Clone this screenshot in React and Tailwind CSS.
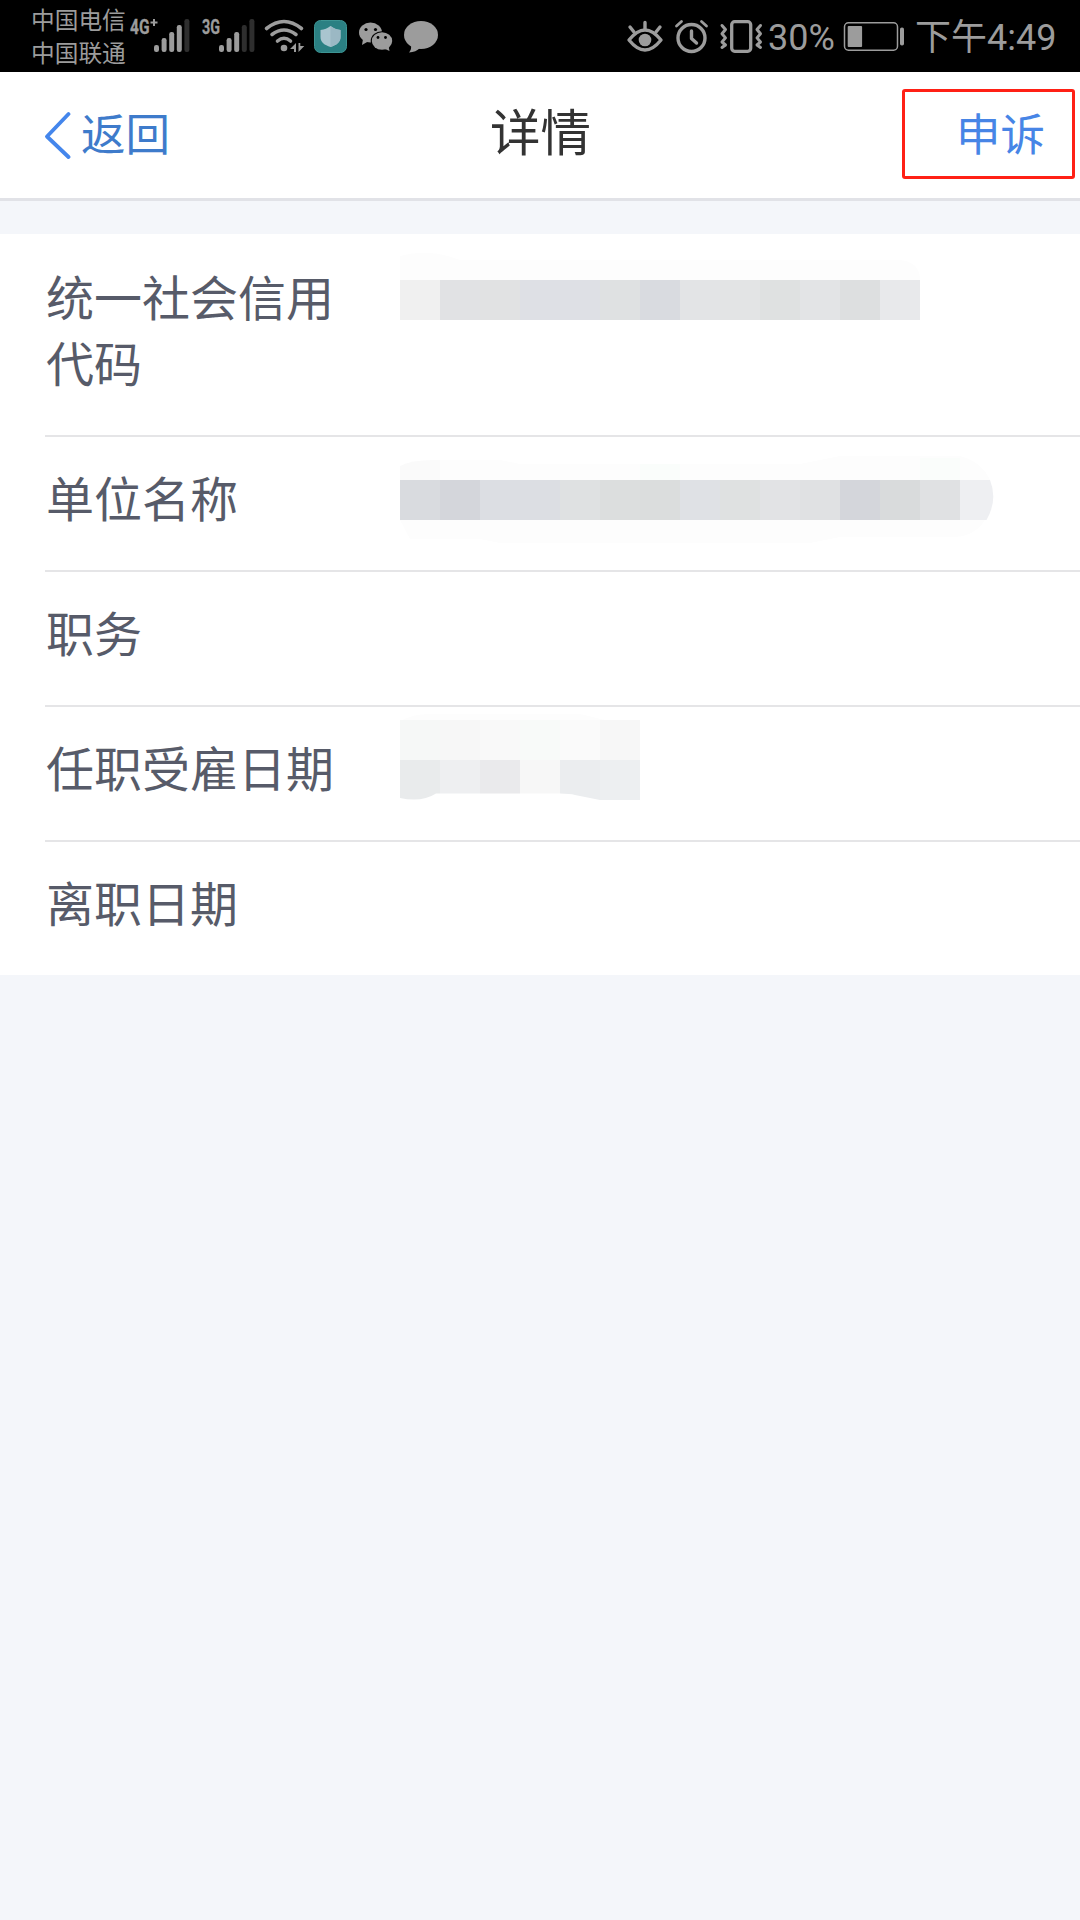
import clsx from "clsx";

const SignalIcon = ({ label, plus, level, className }) => (
  <svg viewBox="0 0 64 72" className={clsx("h-[72px] w-16 shrink-0", className)}>
    <text
      x="2"
      y="33.5"
      fontSize="20"
      fontWeight="700"
      fontFamily="Roboto, 'Liberation Sans', sans-serif"
      textLength={plus ? 19.5 : 18}
      lengthAdjust="spacingAndGlyphs"
      fill="#9c9c9c"
      stroke="#9c9c9c"
      strokeWidth="0.3"
    >
      {label}
    </text>
    {plus && <path d="M26 19v7M22.500 22.500h7" stroke="#9c9c9c" strokeWidth="2" />}
    {[45, 38, 32, 25, 19].map((top, i) => (
      <rect
        key={top}
        x={(plus ? 26 : 19) + i * 7.600}
        y={top}
        width="5"
        height={52 - top}
        rx="2.200"
        fill={i < level ? "#9c9c9c" : "#2e2e2e"}
      />
    ))}
  </svg>
);

const WifiIcon = () => (
  <svg viewBox="262 0 42 72" className="h-[72px] w-[42px] shrink-0">
    <g fill="none" stroke="#9c9c9c" strokeWidth="3.600" strokeLinecap="round">
      <path d="M265.500 28.500Q283 14.500 300.500 28.500" />
      <path d="M271 34.500Q283 25.500 295 34.500" />
      <path d="M276.500 41Q283 35.500 289.500 41" />
    </g>
    <circle cx="283" cy="48" r="3.300" fill="#9c9c9c" />
    <path d="M295 43v9h-2v-3h-4zM297.500 52v-9h1.800v3h4z" fill="#9c9c9c" />
  </svg>
);

const ShieldIcon = () => (
  <svg viewBox="312 0 36 72" className="h-[72px] w-9 shrink-0">
    <rect x="313.500" y="20.500" width="32" height="32" rx="6" fill="#2b8083" stroke="#3d9493" />
    <path
      d="M329.500 26c3 2.400 6 3.500 10 4v7c0 5.500-4 8-10 10-6-2-10-4.500-10-10v-7c4-.5 7-1.600 10-4z"
      fill="#a9c5cf"
    />
    <path d="M329.500 26c3 2.400 6 3.500 10 4v7c0 5.500-4 8-10 10z" fill="#9bb8c4" />
  </svg>
);

const WeChatIcon = () => (
  <svg viewBox="356 0 38 72" className="h-[72px] w-[38px] shrink-0">
    <ellipse cx="369.500" cy="32.500" rx="11.500" ry="10" fill="#9c9c9c" />
    <path d="M362 39l-1 6 6-3.500z" fill="#9c9c9c" />
    <ellipse cx="381" cy="41" rx="11.300" ry="9.800" fill="#000" />
    <ellipse cx="381" cy="41" rx="10.200" ry="8.700" fill="#9c9c9c" />
    <path d="M383 48.500l5.500 2.500-1-5z" fill="#9c9c9c" />
    <g fill="#000">
      <circle cx="365" cy="29.500" r="1.600" />
      <circle cx="374.500" cy="29.500" r="1.600" />
      <circle cx="377" cy="37.500" r="1.400" />
      <circle cx="384.500" cy="37.500" r="1.400" />
    </g>
  </svg>
);

const ChatIcon = () => (
  <svg viewBox="402 0 36 72" className="h-[72px] w-9 shrink-0">
    <ellipse cx="420" cy="35" rx="17" ry="14" fill="#9c9c9c" />
    <path d="M410 44q1 5-2 8.500 7-.5 11-4.500z" fill="#9c9c9c" />
  </svg>
);

const EyeIcon = () => (
  <svg viewBox="626 0 38 72" className="h-[72px] w-[38px] shrink-0">
    <g fill="none" stroke="#9c9c9c" strokeWidth="3.400" strokeLinecap="round" strokeLinejoin="round">
      <path d="M629 40q16-20 32 0-16 20-32 0z" />
      <path d="M645 29v-6.500M634 32l-4-5M656 32l4-5" />
    </g>
    <circle cx="645" cy="40" r="6.300" fill="#9c9c9c" />
  </svg>
);

const AlarmIcon = () => (
  <svg viewBox="674 0 36 72" className="h-[72px] w-9 shrink-0">
    <g fill="none" stroke="#9c9c9c" strokeWidth="3.400" strokeLinecap="round" strokeLinejoin="round">
      <circle cx="691.500" cy="38" r="13.500" />
      <path d="M691.500 31v7.500l5 4.500" />
      <path d="M676.500 26l5-4.500M706.500 26l-5-4.500" strokeWidth="2.800" />
    </g>
  </svg>
);

const VibrateIcon = () => (
  <svg viewBox="719 0 44 72" className="h-[72px] w-11 shrink-0">
    <g fill="none" stroke="#9c9c9c" strokeWidth="3.300" strokeLinecap="round" strokeLinejoin="round">
      <rect x="731.700" y="21.700" width="19" height="29.600" rx="3" />
      <path d="M722 25.500l3.500 4-3.500 4.200 3.500 4.200-3.500 4.100 3.500 3-3.500 2.500" strokeWidth="3" />
      <path d="M760.500 25.500l-3.500 4 3.500 4.200-3.500 4.200 3.500 4.100-3.500 3 3.500 2.500" strokeWidth="3" />
    </g>
  </svg>
);

const BatteryIcon = () => (
  <svg viewBox="843 0 62 72" className="h-[72px] w-[62px] shrink-0">
    <rect x="844.500" y="22.800" width="53" height="27.400" rx="4" fill="none" stroke="#9c9c9c" strokeWidth="1.500" />
    <rect x="847.700" y="26" width="14.400" height="21" rx="1" fill="#9c9c9c" />
    <rect x="900" y="27.500" width="4" height="18" rx="1.800" fill="#9c9c9c" />
  </svg>
);

const StatusBar = () => (
  <div className="flex h-[72px] items-center bg-black text-[#9c9c9c]">
    <div className="ml-[31px] w-[97px] shrink-0 pt-1 whitespace-nowrap text-[23.700px] leading-[33px]">
      <div>中国电信</div>
      <div>中国联通</div>
    </div>
    <SignalIcon label="4G" plus level={4} />
    <SignalIcon label="3G" level={3} className="ml-2" />
    <div className="-ml-px flex gap-2">
      <WifiIcon />
      <ShieldIcon />
      <WeChatIcon />
      <ChatIcon />
    </div>
    <div className="ml-auto flex h-full items-center pr-[23px]">
      <EyeIcon />
      <div className="w-2.5" />
      <AlarmIcon />
      <div className="w-[9px]" />
      <VibrateIcon />
      <span className="ml-[5px] w-[75px] pt-[3px] text-[36px] leading-none">30%</span>
      <BatteryIcon />
      <span className="ml-[10px] w-[142px] pt-[3px] whitespace-nowrap text-[36px] leading-none">下午4:49</span>
    </div>
  </div>
);

const Header = () => (
  <header className="flex h-[129px] items-start justify-between border-b-[3px] border-[#e1e2e7] bg-white">
    <button className="flex w-[178px] items-start pt-[31px] pl-11 text-[44.500px] leading-[66px] text-[#3e7bcb]">
      <svg viewBox="0 0 28 48" className="mt-2 h-12 w-7 shrink-0">
        <path
          d="M24.500 3L3 25.500 24.500 46"
          fill="none"
          stroke="#4486ec"
          strokeWidth="3.800"
          strokeLinecap="round"
          strokeLinejoin="round"
        />
      </svg>
      <span className="ml-[9px] whitespace-nowrap">返回</span>
    </button>
    <h1 className="pt-[25px] pl-px text-[50.500px] leading-[74px] text-[#333]">详情</h1>
    <button className="mt-[17px] mr-[5px] flex h-[90px] w-[173px] items-center justify-end rounded-[3px] border-[3px] border-[#ff2015] pt-1 pr-[27px] text-[44.500px] leading-none text-[#4785e6]">
      申诉
    </button>
  </header>
);

const MosaicCode = () => (
  <svg viewBox="0 0 520 80" className="h-20 w-[520px]">
    <path d="M0 16Q30 8 60 20h440q20 2 20 20H0z" fill="#fdfdfd" />
    {["#f0f0f0", "#e1e2e4", "#e1e2e3", "#dee0e5", "#dee0e5", "#dfe1e2", "#d9dbe0", "#e3e4e6", "#e3e4e5", "#dfe1e1", "#e3e4e6", "#dddfe0", "#e8e9eb"].map(
      (fill, i) => (
        <rect key={i} x={i * 40} y="40" width="40" height="40" fill={fill} />
      )
    )}
  </svg>
);

const MosaicName = () => (
  <svg viewBox="0 0 600 110" className="h-[110px] w-[600px]">
    <path d="M0 30Q10 20 40 20h60l20 4h280l40-8h120q22 6 30 24H0zM0 80h585q-10 16-30 17H440l-30 6H100l-20-4H10z" fill="#fdfdfd" />
    <path d="M0 40V26q12-7 40-6v20z" fill="#fafafa" />
    <path d="M240 24h40v16h-40zM520 18h40v22h-40z" fill="#fafdfb" />
    {["#d9dbdf", "#d4d6db", "#dcdee3", "#dcdee3", "#dfe1e2", "#dcdede", "#dbdddd", "#dfe1e5", "#dfe1e1", "#e2e3e5", "#e0e1e3", "#d4d6db", "#d9dbdc", "#e0e1e3"].map(
      (fill, i) => (
        <rect key={i} x={i * 40} y="40" width="40" height="40" fill={fill} />
      )
    )}
    <path d="M560 40h30q8 20-3.500 40H560z" fill="#eeeff2" />
  </svg>
);

const MosaicDate = () => (
  <svg viewBox="0 0 240 90" className="h-[90px] w-60">
    <path d="M0 12Q10 4 30 4h150l25 6H0z" fill="#fdfdfd" />
    {["#f6f8f7", "#f7f7f7", "#f9f9f9", "#f8faf9", "#fafafa", "#f7f7f7"].map((fill, i) => (
      <rect key={i} x={i * 40} y="10" width="40" height="40" fill={fill} />
    ))}
    <path d="M0 50h40v33.500h-4q-14 9-36 4.500z" fill="#e9ebec" />
    <path d="M40 50h40v33.500H40z" fill="#eeeff1" />
    <path d="M80 50h40v33.500H80z" fill="#eaeaec" />
    <path d="M120 50h40v33.500h-40z" fill="#f7f7f7" />
    <path d="M160 50h40v40l-25-5q-5-1.500-15-1.500z" fill="#ebedef" />
    <path d="M200 50h40v40h-40z" fill="#edeff1" />
  </svg>
);

const rows = [
  { label: "统一社会信用代码", height: "h-[203px]", labelTop: "pt-[33px]", value: <MosaicCode />, offset: "pt-[6px]" },
  { label: "单位名称", height: "h-[135px]", labelTop: "pt-[31px]", value: <MosaicName />, offset: "pt-[3px]" },
  { label: "职务", height: "h-[135px]", labelTop: "pt-[31px]" },
  { label: "任职受雇日期", height: "h-[135px]", labelTop: "pt-[31px]", value: <MosaicDate />, offset: "pt-[3px]" },
  { label: "离职日期", height: "h-[133px]", labelTop: "pt-[31px]" },
];

const DetailRow = ({ label, height, labelTop, value, offset, last }) => (
  <div className={clsx("flex items-start", height, !last && "border-b-2 border-[#e5e5e7]")}>
    <div className={clsx("w-[355px] shrink-0 pr-[60px] pl-px text-[48px] leading-[66px] text-[#575b69]", labelTop)}>
      {label}
    </div>
    {value && <div className={offset}>{value}</div>}
  </div>
);

const App = () => (
  <div className="min-h-screen bg-[#f4f6fa] font-[Roboto,'Noto_Sans_CJK_SC',sans-serif]">
    <StatusBar />
    <Header />
    <main className="mt-[33px] bg-white pl-[45px]">
      {rows.map((row, i) => (
        <DetailRow key={row.label} {...row} last={i === rows.length - 1} />
      ))}
    </main>
  </div>
);

export default App;
